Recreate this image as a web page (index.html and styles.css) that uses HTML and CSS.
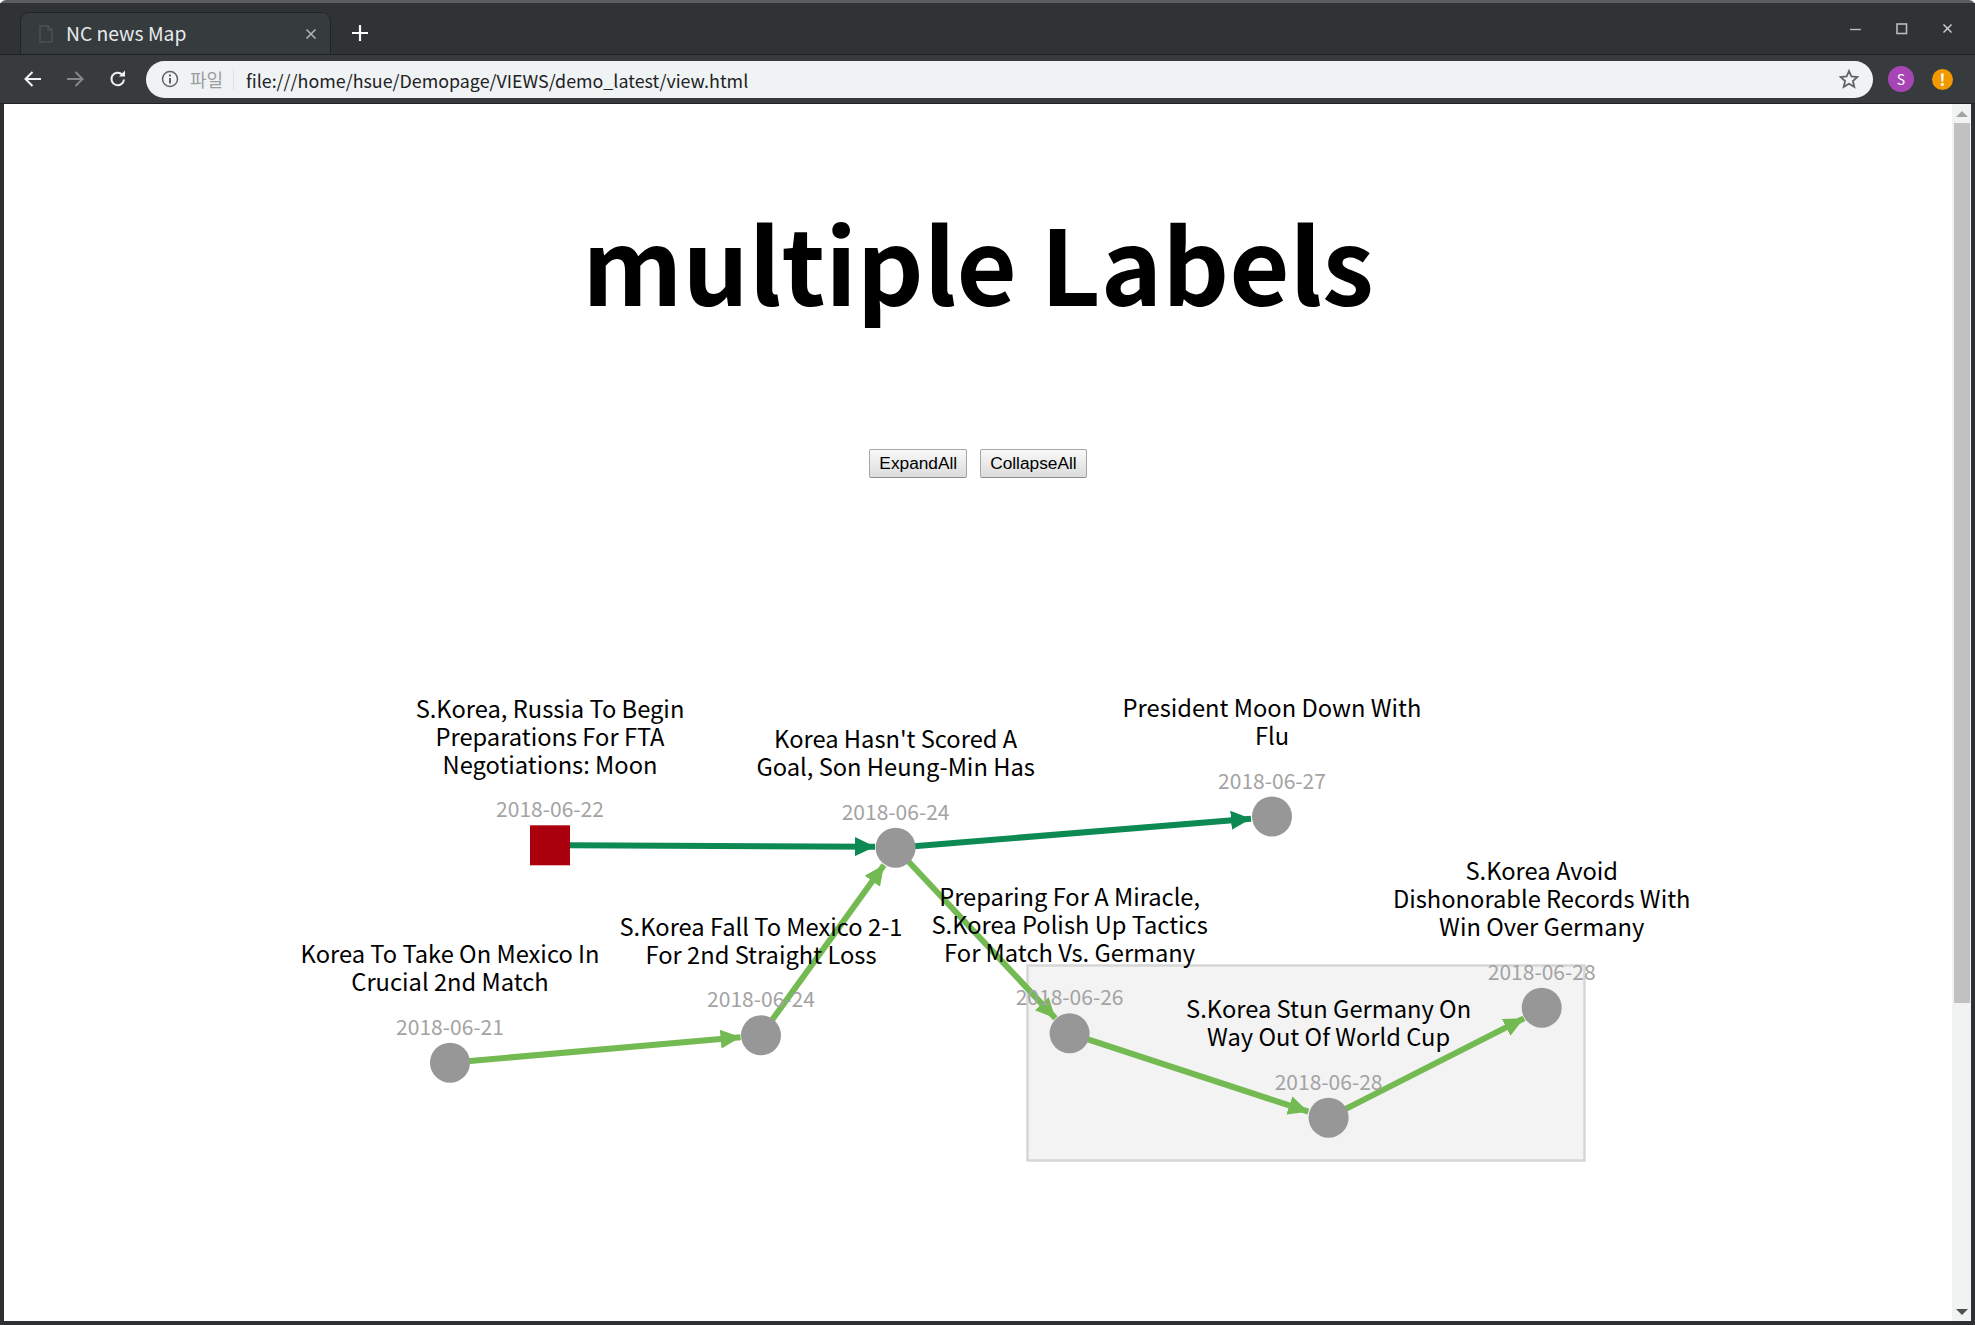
FILE: index.html
```html
<!DOCTYPE html>
<html lang="en">
<head>
    <meta charset="UTF-8">
    <meta name="viewport" content="width=device-width, initial-scale=1.0">
    <title>NC news Map</title>
    <link rel="stylesheet" href="styles.css">
</head>
<body>
<div class="window">
    <div class="tabstrip">
        <div class="tab">
            <svg class="tab-icon" width="14" height="18" viewBox="0 0 14 18"><path d="M1 1h8l4 4v12H1z M9 1v4h4" fill="none" stroke="#4c5154" stroke-width="1.5"/></svg>
            <span class="tab-title">NC news Map</span>
            <svg class="tab-close" width="12" height="12" viewBox="0 0 12 12"><path d="M1.5 1.5l9 9M10.5 1.5l-9 9" stroke="#b4b7b9" stroke-width="1.5"/></svg>
        </div>
        <svg class="new-tab" width="16" height="16" viewBox="0 0 16 16"><path d="M8 0v16M0 8h16" stroke="#fff" stroke-width="2.2"/></svg>
        <div class="win-controls">
            <svg width="12" height="12" viewBox="0 0 12 12"><path d="M0 6.5h11" stroke="#b9bbbc" stroke-width="1.4"/></svg>
            <svg width="12" height="12" viewBox="0 0 12 12"><rect x="1" y="1" width="9.5" height="9.5" fill="none" stroke="#b9bbbc" stroke-width="1.6"/></svg>
            <svg width="12" height="12" viewBox="0 0 12 12"><path d="M1.5 1.5l8 8M9.5 1.5l-8 8" stroke="#d5d6d7" stroke-width="1.4"/></svg>
        </div>
    </div>
    <div class="toolbar">
        <svg class="nav-btn" width="20" height="18" viewBox="0 0 20 18"><path d="M18 9H3M9.5 2L2.5 9l7 7" fill="none" stroke="#f1f3f4" stroke-width="2"/></svg>
        <svg class="nav-btn" width="20" height="18" viewBox="0 0 20 18"><path d="M2 9h15M10.500 2l7 7-7 7" fill="none" stroke="#85888a" stroke-width="2"/></svg>
        <svg class="nav-btn reload" width="20" height="20" viewBox="0 0 20 20"><path d="M16 10.500a6.300 6.300 0 1 1-1.800-5" fill="none" stroke="#f1f3f4" stroke-width="2"/><path d="M17 1.500v6h-6z" fill="#f1f3f4"/></svg>
        <div class="omnibox">
            <svg class="info-icon" width="18" height="18" viewBox="0 0 18 18"><circle cx="9" cy="9" r="7.500" fill="none" stroke="#5f6368" stroke-width="1.500"/><path d="M9 8v5.500M9 4.500v2" stroke="#5f6368" stroke-width="2"/></svg>
            <span class="scheme">파일</span>
            <span class="url">file:///home/hsue/Demopage/VIEWS/demo_latest/view.html</span>
            <svg class="star" width="20" height="20" viewBox="0 0 20 20"><path d="M10 2l2.400 5.500 6 .5-4.500 4 1.400 5.900L10 14.800l-5.300 3.100 1.400-5.900-4.500-4 6-.5z" fill="none" stroke="#5f6368" stroke-width="1.800"/></svg>
        </div>
        <div class="avatar">S</div>
        <div class="alert">!</div>
    </div>
    <div class="viewport">
        <main class="page">
            <h1 class="page-title">multiple Labels</h1>
            <div class="actions">
                <button class="action-btn">ExpandAll</button>
                <button class="action-btn">CollapseAll</button>
            </div>
            <svg class="map" width="1948" height="817" viewBox="0 0 1948 817">
                <defs>
                    <marker id="head-dark" markerUnits="userSpaceOnUse" markerWidth="20" markerHeight="19" refX="20" refY="9.500" orient="auto"><path d="M0 0L20 9.500L0 19z" fill="#0d8a53"/></marker>
                    <marker id="head-light" markerUnits="userSpaceOnUse" markerWidth="20" markerHeight="19" refX="20" refY="9.500" orient="auto"><path d="M0 0L20 9.500L0 19z" fill="#74ba52"/></marker>
                </defs>
                <rect class="group-box" x="1023.500" y="465.500" width="557" height="195"/>

                <line class="edge-dark" x1="566" y1="345.300" x2="871" y2="346.700"/>
                <line class="edge-dark" x1="891.600" y1="347.700" x2="1247" y2="318.700"/>
                <line class="edge-light" x1="446" y1="562.700" x2="736.600" y2="537.300"/>
                <line class="edge-light" x1="757" y1="535.300" x2="880" y2="365"/>
                <line class="edge-light" x1="891.600" y1="347.700" x2="1051.400" y2="518.300"/>
                <line class="edge-light" x1="1065.600" y1="533.300" x2="1304.400" y2="611.700"/>
                <line class="edge-light" x1="1324.600" y1="617.700" x2="1520" y2="518.300"/>

                <g transform="translate(546 345.300)">
                    <rect class="node-root" x="-20" y="-20" width="40" height="40"/>
                    <text class="node-date" y="-28">2018-06-22</text>
                    <text class="node-title" y="-127">S.Korea, Russia To Begin</text>
                    <text class="node-title" y="-99">Preparations For FTA</text>
                    <text class="node-title" y="-71">Negotiations: Moon</text>
                </g>
                <g transform="translate(891.600 347.700)">
                    <circle class="node" r="20"/>
                    <text class="node-date" y="-28">2018-06-24</text>
                    <text class="node-title" y="-100">Korea Hasn't Scored A</text>
                    <text class="node-title" y="-72">Goal, Son Heung-Min Has</text>
                </g>
                <g transform="translate(1268 316.500)">
                    <circle class="node" r="20"/>
                    <text class="node-date" y="-28">2018-06-27</text>
                    <text class="node-title" y="-100">President Moon Down With</text>
                    <text class="node-title" y="-72">Flu</text>
                </g>
                <g transform="translate(446 562.700)">
                    <circle class="node" r="20"/>
                    <text class="node-date" y="-28">2018-06-21</text>
                    <text class="node-title" y="-100">Korea To Take On Mexico In</text>
                    <text class="node-title" y="-72">Crucial 2nd Match</text>
                </g>
                <g transform="translate(757 535.300)">
                    <circle class="node" r="20"/>
                    <text class="node-date" y="-28">2018-06-24</text>
                    <text class="node-title" y="-99">S.Korea Fall To Mexico 2-1</text>
                    <text class="node-title" y="-71">For 2nd Straight Loss</text>
                </g>
                <g transform="translate(1065.600 533.300)">
                    <circle class="node" r="20"/>
                    <text class="node-date" y="-28">2018-06-26</text>
                    <text class="node-title" y="-127">Preparing For A Miracle,</text>
                    <text class="node-title" y="-99">S.Korea Polish Up Tactics</text>
                    <text class="node-title" y="-71">For Match Vs. Germany</text>
                </g>
                <g transform="translate(1324.600 617.700)">
                    <circle class="node" r="20"/>
                    <text class="node-date" y="-28">2018-06-28</text>
                    <text class="node-title" y="-100">S.Korea Stun Germany On</text>
                    <text class="node-title" y="-72">Way Out Of World Cup</text>
                </g>
                <g transform="translate(1537.700 507.700)">
                    <circle class="node" r="20"/>
                    <text class="node-date" y="-28">2018-06-28</text>
                    <text class="node-title" y="-128">S.Korea Avoid</text>
                    <text class="node-title" y="-100">Dishonorable Records With</text>
                    <text class="node-title" y="-72">Win Over Germany</text>
                </g>
            </svg>
        </main>
        <div class="scrollbar">
            <div class="scroll-up"></div>
            <div class="scroll-track"><div class="scroll-thumb"></div></div>
            <div class="scroll-down"></div>
        </div>
    </div>
</div>
</body>
</html>
```

FILE: styles.css
```css
html, body {
    margin: 0;
    padding: 0;
    height: 100%;
    overflow: hidden;
}

.window {
    display: flex;
    flex-direction: column;
    width: 1975px;
    height: 1325px;
    box-sizing: border-box;
    padding: 0 4px 4px 4px;
    background-color: #2c3033;
    border-top: 3px solid #5a5d5f;
    border-radius: 6px 6px 0 0;
    font-family: "Noto Sans CJK KR", "Noto Sans", sans-serif;
}

/* tab strip */
.tabstrip {
    display: flex;
    align-items: flex-end;
    height: 52px;
    flex: none;
    background-color: #2f3336;
    margin: 0 -4px;
    padding-left: 20px;
    box-sizing: border-box;
    border-bottom: 1px solid #1f2224;
}

.tab {
    display: flex;
    align-items: center;
    width: 311px;
    height: 42px;
    box-sizing: border-box;
    padding: 0 13px 0 18px;
    background-color: #363b3e;
    border: 1px solid #222527;
    border-bottom: none;
    border-radius: 9px 9px 0 0;
    color: #e8eaed;
}

.tab-icon {
    margin-right: 13px;
}

.tab-title {
    flex: 1;
    margin-top: -2px;
    font-size: 19.300px;
}

.new-tab {
    margin: 0 0 13px 21px;
}

.win-controls {
    display: flex;
    align-self: flex-start;
    gap: 34px;
    margin: 20px 0 0 auto;
    padding-right: 21px;
}

/* toolbar */
.toolbar {
    display: flex;
    align-items: center;
    height: 49px;
    flex: none;
    box-sizing: border-box;
    margin: 0 -4px;
    padding: 0 0 0 23px;
    background-color: #373b3e;
    border-bottom: 1px solid #1f2224;
}

.nav-btn {
    margin-right: 22px;
}

.reload {
    margin-left: 1px;
}

.omnibox {
    display: flex;
    align-items: center;
    width: 1727px;
    height: 37px;
    margin-left: -4px;
    padding: 0 14px 0 15px;
    box-sizing: border-box;
    background-color: #f0f3f4;
    border-radius: 19px;
}

.info-icon {
    margin-right: 11px;
}

.scheme {
    width: 33px;
    padding-right: 10px;
    margin-right: 12px;
    border-right: 1px solid #dfe1e3;
    color: #9a9ea1;
    font-size: 18px;
    line-height: 21px;
    white-space: nowrap;
}

.url {
    flex: 1;
    margin-top: 1px;
    color: #202124;
    font-size: 17.850px;
}

.avatar, .alert {
    display: flex;
    align-items: center;
    justify-content: center;
    border-radius: 50%;
    color: #fff;
}

.avatar {
    width: 26px;
    height: 26px;
    margin-left: 15px;
    background-color: #a845b5;
    font-size: 14px;
}

.alert {
    width: 21px;
    height: 21px;
    margin-left: 18px;
    background-color: #f29900;
    font-size: 16px;
    font-weight: 700;
}

/* page */
.viewport {
    display: flex;
    flex: 1;
    min-height: 0;
}

.page {
    flex: 1;
    min-width: 0;
    background-color: #fff;
    overflow: hidden;
}

.page-title {
    margin: 0;
    padding-top: 92px;
    height: 250px;
    box-sizing: border-box;
    color: #000;
    font-size: 104px;
    font-weight: 700;
    line-height: 130px;
    text-align: center;
}

.actions {
    display: flex;
    justify-content: center;
    gap: 13px;
    height: 51px;
    padding-top: 95px;
    box-sizing: content-box;
}

.action-btn {
    height: 29px;
    padding: 0 9px;
    border: 1px solid #a6a6a6;
    border-bottom-color: #8e8e8e;
    border-radius: 2px;
    background-image: linear-gradient(#f8f8f8, #dcdcdc);
    color: #000;
    font-family: "Liberation Sans", Arial, sans-serif;
    font-size: 17.300px;
}

/* map */
.map {
    display: block;
}

.group-box {
    fill: #f3f3f3;
    stroke: #d6d6d6;
    stroke-width: 2.500;
}

.edge-dark, .edge-light {
    stroke-width: 6;
}

.edge-dark {
    stroke: #0d8a53;
    marker-end: url(#head-dark);
}

.edge-light {
    stroke: #74ba52;
    marker-end: url(#head-light);
}

.node {
    fill: #979797;
}

.node-root {
    fill: #ab000d;
}

.node-title, .node-date {
    text-anchor: middle;
    font-family: "Noto Sans CJK KR", "Noto Sans", sans-serif;
}

.node-title {
    fill: #000;
    font-size: 23.700px;
}

.node-date {
    fill: #a3a3a3;
    font-size: 21px;
}

/* scrollbar */
.scrollbar {
    display: flex;
    flex-direction: column;
    align-items: center;
    width: 19px;
    flex: none;
    background-color: #f1f3f3;
}

.scroll-up, .scroll-down {
    width: 0;
    height: 0;
    flex: none;
    border-left: 6px solid transparent;
    border-right: 6px solid transparent;
}

.scroll-up {
    margin: 7px 0 6px;
    border-bottom: 6px solid #a3a3a3;
}

.scroll-down {
    margin: 6px 0 6px;
    border-top: 6px solid #505050;
}

.scroll-track {
    flex: 1;
    width: 16px;
}

.scroll-thumb {
    height: 880px;
    background-color: #c1c1c1;
}
```
